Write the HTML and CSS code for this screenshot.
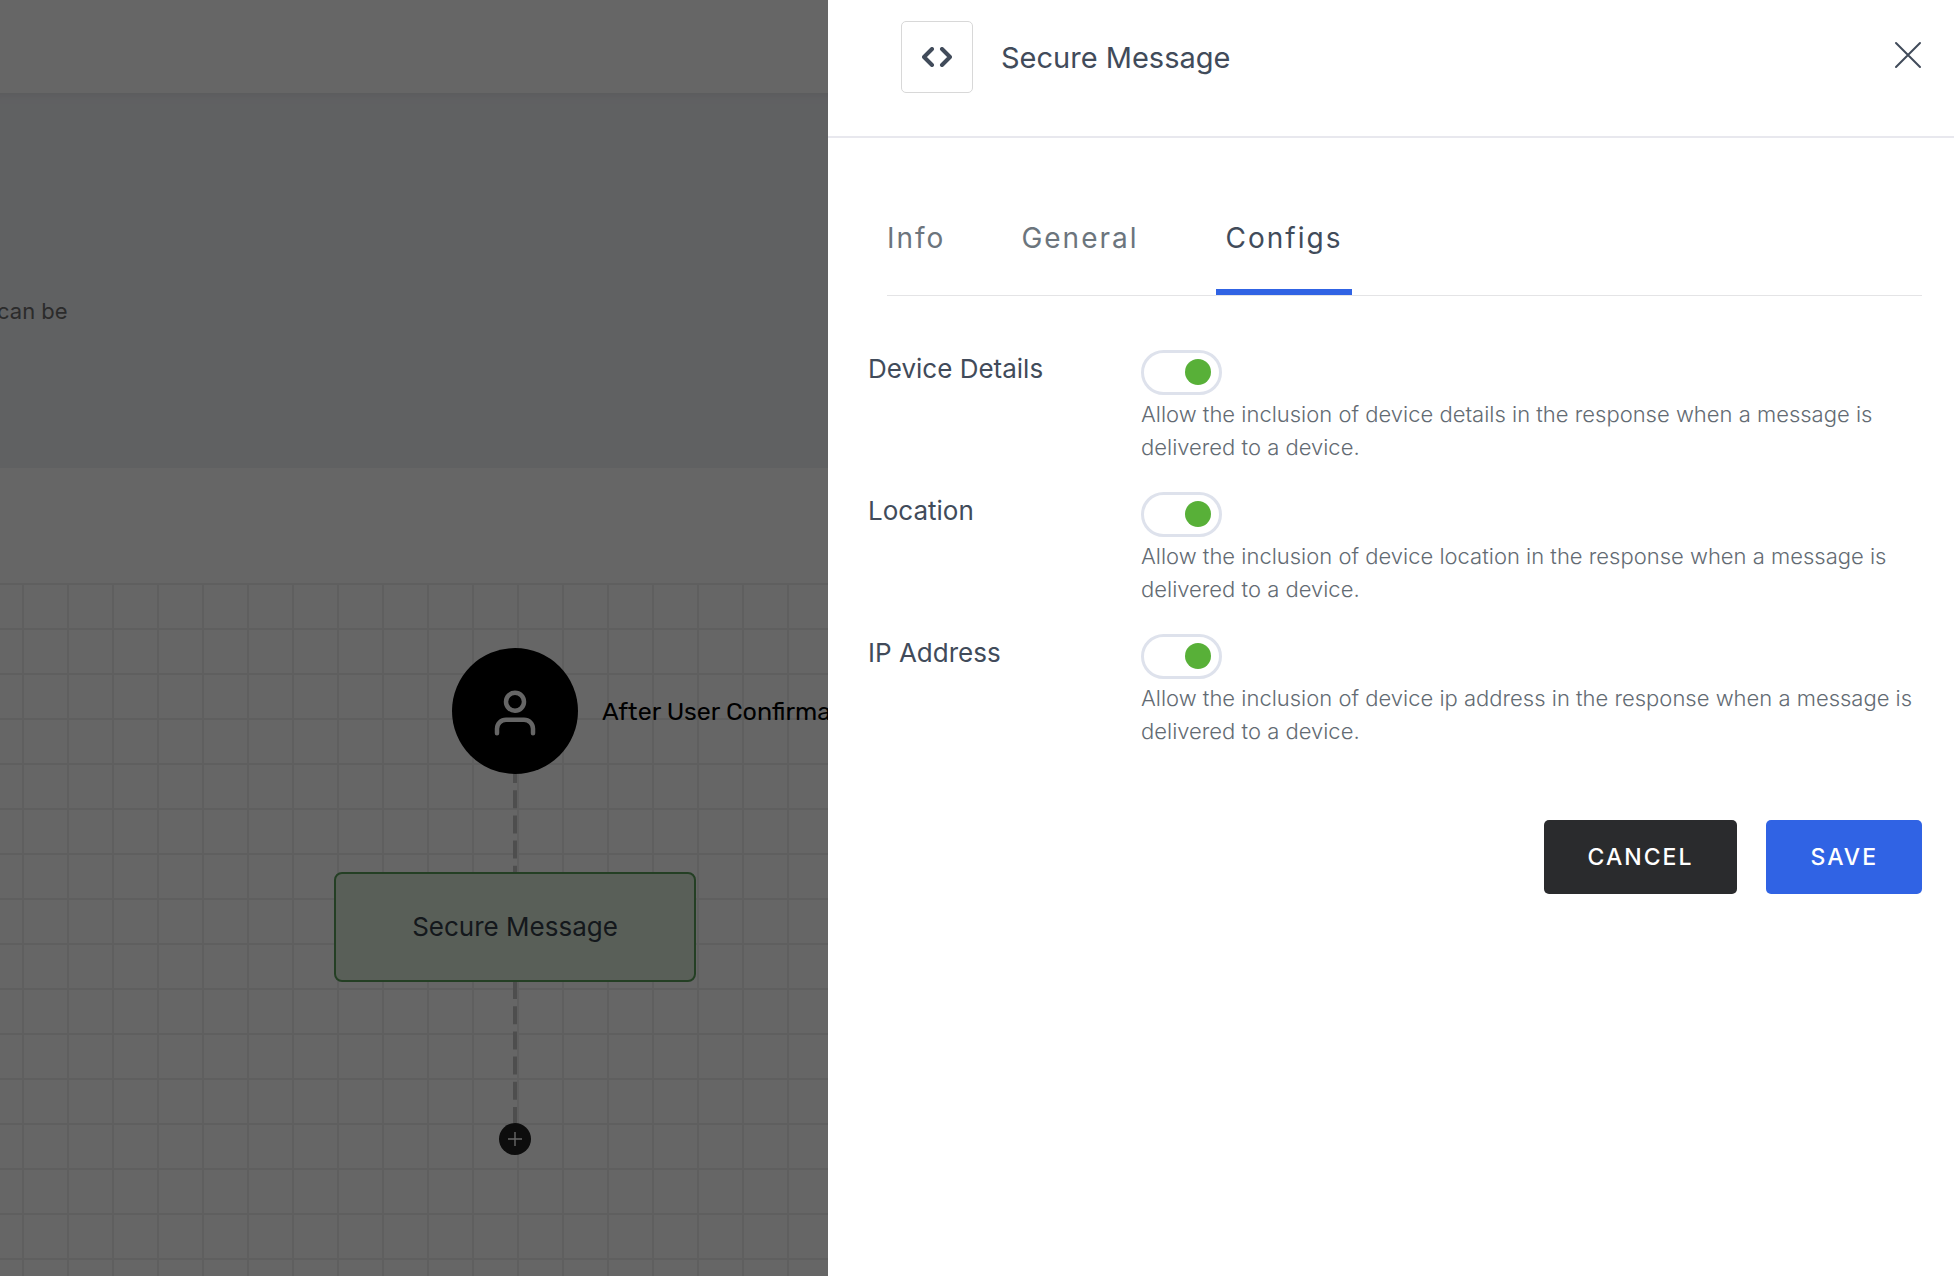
FILE: index.html
```html
<!DOCTYPE html>
<html lang="en">
<head>
<meta charset="utf-8">
<meta name="viewport" content="width=device-width, initial-scale=1">
<title>Secure Message</title>
<link rel="stylesheet" href="styles.css">
</head>
<body>
<main class="page">
  <header class="topbar"></header>
  <section class="banner"><p class="banner-text">can be</p></section>
  <section class="canvas">
    <svg class="edges" width="4" height="560" viewBox="0 0 4 560" aria-hidden="true">
      <path d="M2 182V290" stroke="#c3c3c3" stroke-width="4" stroke-dasharray="18 7.2"/>
      <path d="M2 398V545" stroke="#c3c3c3" stroke-width="4" stroke-dasharray="18 7.2"/>
    </svg>
    <div class="start-node">
      <svg width="54" height="54" viewBox="0 0 24 24" fill="none" stroke="#fff" stroke-width="2" stroke-linecap="round" stroke-linejoin="round" aria-hidden="true"><path d="M20 21v-2a4 4 0 0 0-4-4H8a4 4 0 0 0-4 4v2"/><circle cx="12" cy="7" r="4"/></svg>
    </div>
    <p class="start-label">After User Confirma</p>
    <div class="step-node">Secure Message</div>
    <button class="add-node" type="button" aria-label="Add step">
      <svg width="14" height="14" viewBox="0 0 14 14" stroke="#fff" stroke-width="1.4" aria-hidden="true"><path d="M7 0v14M0 7h14"/></svg>
    </button>
  </section>
</main>
<div class="backdrop">
  <aside class="drawer" role="dialog" aria-labelledby="drawer-title">
    <header class="drawer-head">
      <span class="drawer-icon">
        <svg width="30" height="20" viewBox="0 0 30 20" fill="none" stroke="#414b5a" stroke-width="4" stroke-linecap="round" stroke-linejoin="round" aria-hidden="true"><path d="M10 2 2 10l8 8M20 2l8 8-8 8"/></svg>
      </span>
      <h1 class="drawer-title" id="drawer-title">Secure Message</h1>
      <button class="close" type="button" aria-label="Close">
        <svg width="28" height="28" viewBox="0 0 28 28" fill="none" stroke="#414b5a" stroke-width="2" stroke-linecap="round" aria-hidden="true"><path d="M2 2l24 24M26 2 2 26"/></svg>
      </button>
    </header>
    <div class="drawer-body">
      <nav class="tabs" role="tablist">
        <button class="tab" type="button" role="tab">Info</button>
        <button class="tab" type="button" role="tab">General</button>
        <button class="tab tab-active" type="button" role="tab" aria-selected="true">Configs</button>
      </nav>
      <form class="form">
        <div class="field">
          <label class="field-label" for="device">Device Details</label>
          <div class="field-main">
            <input class="toggle" type="checkbox" id="device" checked>
            <p class="hint">Allow the inclusion of device details in the response when a message is delivered to a device.</p>
          </div>
        </div>
        <div class="field">
          <label class="field-label" for="location">Location</label>
          <div class="field-main">
            <input class="toggle" type="checkbox" id="location" checked>
            <p class="hint">Allow the inclusion of device location in the response when a message is delivered to a device.</p>
          </div>
        </div>
        <div class="field">
          <label class="field-label" for="ip">IP Address</label>
          <div class="field-main">
            <input class="toggle" type="checkbox" id="ip" checked>
            <p class="hint">Allow the inclusion of device ip address in the response when a message is delivered to a device.</p>
          </div>
        </div>
        <div class="actions">
          <button class="btn btn-dark" type="button">CANCEL</button>
          <button class="btn btn-blue" type="submit">SAVE</button>
        </div>
      </form>
    </div>
  </aside>
</div>
</body>
</html>
```
FILE: styles.css
```css
* { box-sizing: border-box; }

body {
  margin: 0;
  overflow: hidden;
  background: #fff;
  color: #414b5a;
  font-family: Inter, "Liberation Sans", sans-serif;
}

p, h1 { margin: 0; }

button {
  padding: 0;
  border: 0;
  background: none;
  color: inherit;
  font: inherit;
  cursor: pointer;
}

svg { display: block; }

/* Workflow page */
.page {
  display: flex;
  flex-direction: column;
  min-height: 100vh;
}

.topbar { height: 93px; }

.banner {
  height: 375px;
  margin-bottom: 115px;
  padding-top: 202px;
  background: #f1f2f6;
  box-shadow: inset 0 12px 12px -12px #dcdde2;
}

.banner-text {
  color: #6c6c6c;
  font-size: 22px;
  line-height: 32px;
  text-indent: -3px;
}

.canvas {
  position: relative;
  flex: 1;
  overflow: hidden;
  background-image:
    linear-gradient(#eee 2px, transparent 2px),
    linear-gradient(90deg, #eee 2px, transparent 2px);
  background-size: 45px 45px;
  background-position: 22px 0;
}

.edges {
  position: absolute;
  left: 513px;
  top: 0;
}

.start-node {
  position: absolute;
  left: 452px;
  top: 65px;
  display: grid;
  place-items: center;
  width: 126px;
  height: 126px;
  padding-top: 4px;
  border-radius: 50%;
  background: #000;
}

.start-label {
  position: absolute;
  left: 602px;
  top: 113px;
  color: #000;
  font-family: Rubik, Roboto, sans-serif;
  font-size: 25px;
  font-weight: 400;
  line-height: 32px;
  white-space: nowrap;
}

.step-node {
  position: absolute;
  left: 334px;
  top: 289px;
  display: grid;
  place-items: center;
  width: 362px;
  height: 110px;
  padding-bottom: 2px;
  border: 2px solid #5a9e5a;
  border-radius: 8px;
  background: #dfeedc;
  color: #323c48;
  font-size: 26px;
}

.add-node {
  position: absolute;
  left: 499px;
  top: 540px;
  display: grid;
  place-items: center;
  width: 32px;
  height: 32px;
  border-radius: 50%;
  background: #212121;
}

/* Drawer */
.backdrop {
  position: fixed;
  inset: 0;
  display: flex;
  justify-content: flex-end;
  background: rgba(0, 0, 0, 0.6);
}

.drawer {
  width: calc(100% - 828px);
  min-width: 900px;
  overflow: auto;
  background: #fff;
}

.drawer-head {
  display: flex;
  align-items: flex-start;
  padding: 21px 32px 41px 73px;
  border-bottom: 2px solid #e8e8ee;
}

.drawer-icon {
  display: grid;
  place-items: center;
  width: 72px;
  height: 72px;
  border: 1px solid #d8d8d8;
  border-radius: 5px;
}

.drawer-title {
  flex: 1;
  margin-left: 28px;
  font-size: 29px;
  font-weight: 400;
  line-height: 74px;
}

.close { margin-top: 20px; }

.drawer-body { padding: 60px 32px 32px 40px; }

.tabs {
  display: flex;
  margin-left: 19px;
  border-bottom: 1px solid #e4e4e6;
  color: #6c757d;
}

.tab {
  padding: 20px 10px 31px;
  border-bottom: 6px solid transparent;
  font-size: 28px;
  line-height: 40px;
  letter-spacing: 2px;
}

.tab:first-child { padding-left: 0; }
.tab + .tab { margin-left: 56px; }
.tab + .tab-active { margin-left: 67px; }

.tab-active {
  border-color: #3063e4;
  color: #414b5a;
}

.form { padding-top: 54px; }

.field {
  display: grid;
  grid-template-columns: 273px 1fr;
  margin-bottom: 28px;
}

.field-label {
  font-size: 26px;
  line-height: 38px;
}

.toggle {
  display: grid;
  align-items: center;
  justify-items: end;
  width: 81px;
  height: 45px;
  margin: 0 0 3px;
  padding: 0 8px 2px 0;
  border: 3px solid #dee2ec;
  border-radius: 23px;
  background: #fff;
  appearance: none;
  cursor: pointer;
}

.toggle::before {
  width: 26px;
  height: 26px;
  border-radius: 50%;
  background: #58b038;
  content: "";
}

.hint {
  color: #636b73;
  font-size: 22px;
  font-weight: 300;
  line-height: 33px;
}

.actions {
  display: flex;
  justify-content: flex-end;
  gap: 29px;
  padding-top: 44px;
}

.btn {
  padding: 0 44px;
  border-radius: 5px;
  color: #fff;
  font-size: 23px;
  font-weight: 500;
  line-height: 74px;
  letter-spacing: 2px;
}

.btn-dark { background: #2a2b2d; }
.btn-blue { background: #3063e4; }
```
